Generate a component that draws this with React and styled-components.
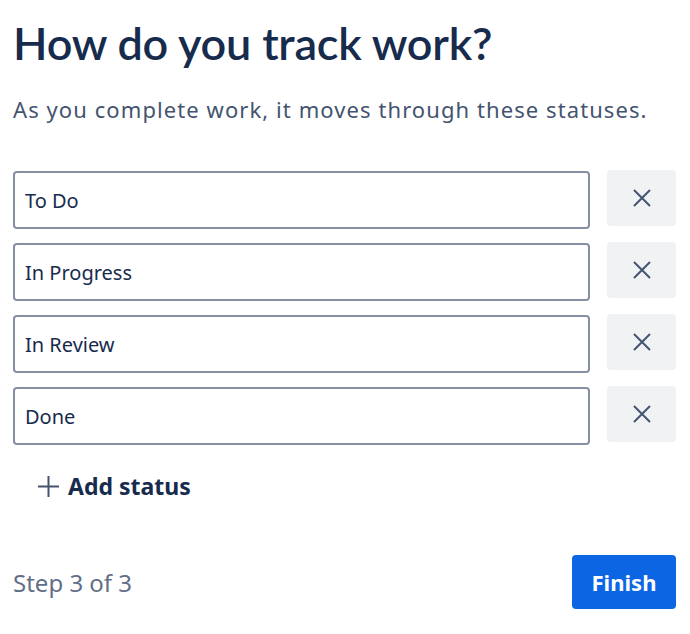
import React from "react";
import styled, { createGlobalStyle } from "styled-components";

const Global = createGlobalStyle`
  html, body { margin: 0; padding: 0; background: #fff; }
  body { font-family: "Noto Sans", "Open Sans", sans-serif; color: #172B4D; }
  * { box-sizing: border-box; }
`;

const Page = styled.div`
  padding: 16px 14px 0 13px;
  display: flex;
  flex-direction: column;
`;

const Title = styled.h1`
  margin: 0;
  font-family: "Lato", "Noto Sans", sans-serif;
  font-size: 45px;
  line-height: 54px;
  font-weight: 600;
  letter-spacing: -0.2px;
  color: #172B4D;
`;

const Subtitle = styled.p`
  margin: 24px 0 0 0;
  font-size: 22px;
  line-height: 30px;
  letter-spacing: 1.08px;
  color: #44546F;
`;

const List = styled.div`
  margin-top: 47px;
  display: flex;
  flex-direction: column;
  gap: 14px;
`;

const Row = styled.div`
  display: flex;
  align-items: flex-start;
  gap: 17px;
`;

const Input = styled.input`
  flex: 1;
  min-width: 0;
  height: 58px;
  border: 2px solid #8590A2;
  border-radius: 4px;
  padding: 0 10px;
  font-family: inherit;
  font-size: 20px;
  color: #172B4D;
  background: #fff;
  outline: none;
`;

const IconButton = styled.button`
  flex: none;
  width: 69px;
  height: 56px;
  margin-top: -1px;
  border: none;
  border-radius: 4px;
  background: #F1F2F4;
  display: flex;
  align-items: center;
  justify-content: center;
  padding: 0;
  cursor: pointer;
`;

const AddButton = styled.button`
  margin-top: 25px;
  margin-left: 25px;
  height: 32px;
  align-self: flex-start;
  display: flex;
  align-items: center;
  gap: 9px;
  border: none;
  background: none;
  padding: 0;
  font-family: inherit;
  font-size: 23px;
  font-weight: 700;
  color: #172B4D;
  cursor: pointer;
`;

const Footer = styled.div`
  margin-top: 53px;
  display: flex;
  align-items: center;
  justify-content: space-between;
`;

const StepText = styled.span`
  font-size: 24px;
  color: #626F86;
`;

const PrimaryButton = styled.button`
  height: 54px;
  width: 104px;
  border: none;
  border-radius: 4px;
  background: #0C66E4;
  color: #fff;
  font-family: inherit;
  font-size: 22px;
  font-weight: 700;
  cursor: pointer;
`;

const CloseIcon = () => (
  <svg width="20" height="20" viewBox="0 0 20 20" fill="none">
    <path d="M2 2 L18 18 M18 2 L2 18" stroke="#44546F" strokeWidth="2" />
  </svg>
);

const PlusIcon = () => (
  <svg width="21" height="21" viewBox="0 0 21 21" fill="none">
    <path d="M10.5 0 V21 M0 10.5 H21" stroke="#44546F" strokeWidth="2" />
  </svg>
);

const statuses = ["To Do", "In Progress", "In Review", "Done"];

export default function App() {
  return (
    <>
      <Global />
      <Page>
        <Title>How do you track work?</Title>
        <Subtitle>As you complete work, it moves through these statuses.</Subtitle>
        <List>
          {statuses.map((s) => (
            <Row key={s}>
              <Input defaultValue={s} />
              <IconButton aria-label="Remove"><CloseIcon /></IconButton>
            </Row>
          ))}
        </List>
        <AddButton><PlusIcon />Add status</AddButton>
        <Footer>
          <StepText>Step 3 of 3</StepText>
          <PrimaryButton>Finish</PrimaryButton>
        </Footer>
      </Page>
    </>
  );
}
